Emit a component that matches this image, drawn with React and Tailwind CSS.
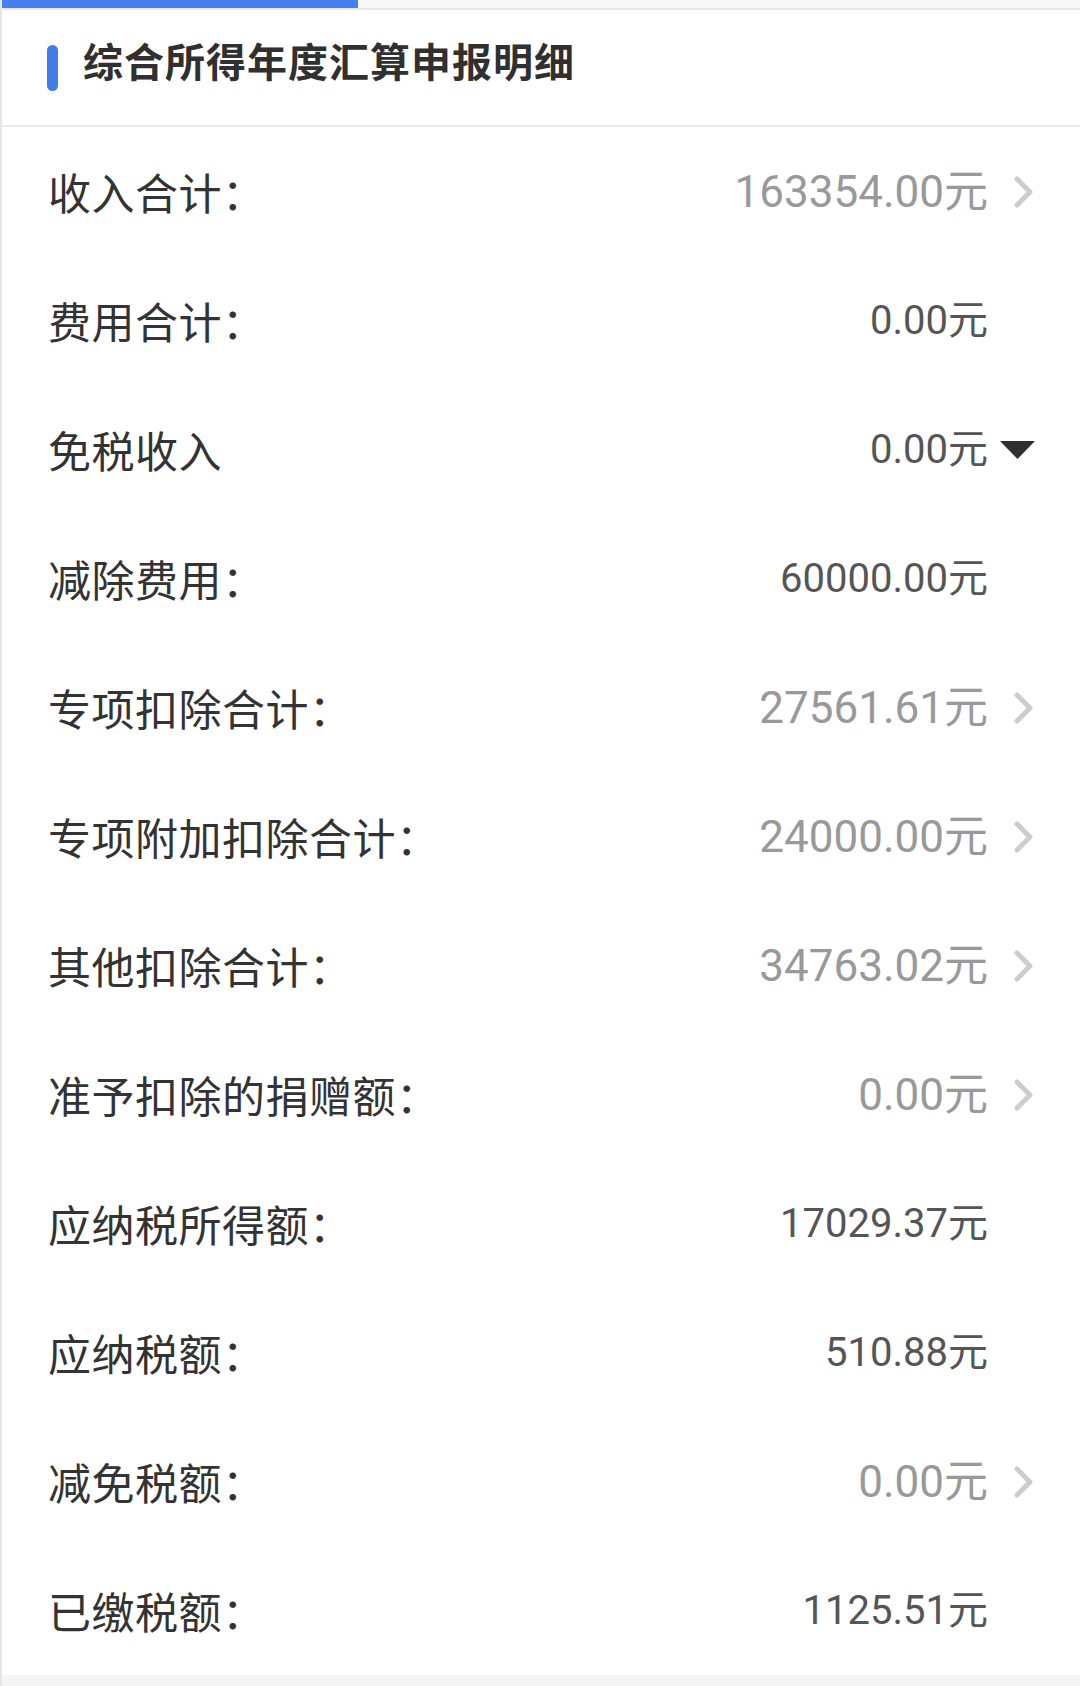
import React from "react";

const rows = [
  { label: "收入合计：", value: "163354.00元", kind: "link" },
  { label: "费用合计：", value: "0.00元", kind: "plain" },
  { label: "免税收入", value: "0.00元", kind: "drop" },
  { label: "减除费用：", value: "60000.00元", kind: "plain" },
  { label: "专项扣除合计：", value: "27561.61元", kind: "link" },
  { label: "专项附加扣除合计：", value: "24000.00元", kind: "link" },
  { label: "其他扣除合计：", value: "34763.02元", kind: "link" },
  { label: "准予扣除的捐赠额：", value: "0.00元", kind: "link" },
  { label: "应纳税所得额：", value: "17029.37元", kind: "plain" },
  { label: "应纳税额：", value: "510.88元", kind: "plain" },
  { label: "减免税额：", value: "0.00元", kind: "link" },
  { label: "已缴税额：", value: "1125.51元", kind: "plain" },
];

function Chevron() {
  return (
    <svg width="24" height="34" viewBox="0 0 24 34" className="block">
      <polyline
        points="5,4 18,17 5,30"
        fill="none"
        stroke="#cdcdcd"
        strokeWidth="5"
        strokeLinecap="round"
        strokeLinejoin="round"
      />
    </svg>
  );
}

function Triangle() {
  return (
    <svg width="36" height="20" viewBox="0 0 36 20" className="block">
      <polygon points="0,1 35,1 17.5,19" fill="#2f2f2f" />
    </svg>
  );
}

export default function App() {
  return (
    <div className="w-[1080px] h-[1686px] bg-white flex flex-col border-l-2 border-[#e6e6e6] overflow-hidden">
      <div className="h-[8px] bg-[#f7f8fa] flex shrink-0">
        <div className="w-[356px] h-full bg-[#4680ec]" />
      </div>
      <div className="h-[2px] bg-[#e8e8e8] shrink-0" />
      <div className="h-[117px] shrink-0 flex items-center border-b-2 border-[#ebebeb] pl-[45px]">
        <div className="w-[11px] h-[46px] rounded-full bg-[#3f7eea]" />
        <div
          className="ml-[25px] text-[40px] font-bold text-[#303030] leading-none tracking-[1px] -mt-[16px]"
          style={{ fontFamily: '"Noto Sans CJK SC", sans-serif' }}
        >
          综合所得年度汇算申报明细
        </div>
      </div>
      <div className="flex flex-col">
        {rows.map((r, i) => (
          <div key={i} className="h-[129px] flex items-center pl-[46px] pr-[44px]">
            <div
              className="flex-1 text-[43px] text-[#333333] leading-none tracking-[0.5px]"
              style={{ fontFamily: '"Noto Sans CJK SC", sans-serif' }}
            >
              {r.label}
            </div>
            <div
              className={
                "leading-none " +
                (r.kind === "link" ? "text-[44px] text-[#999999]" : "text-[40px] text-[#555555]")
              }
              style={{ fontFamily: 'Roboto, "Noto Sans CJK SC", sans-serif' }}
            >
              {r.value}
            </div>
            <div className="w-[48px] flex justify-end items-center">
              {r.kind === "link" && <Chevron />}
              {r.kind === "drop" && <Triangle />}
            </div>
          </div>
        ))}
      </div>
      <div className="flex-1 bg-[#f4f4f4]" />
    </div>
  );
}
